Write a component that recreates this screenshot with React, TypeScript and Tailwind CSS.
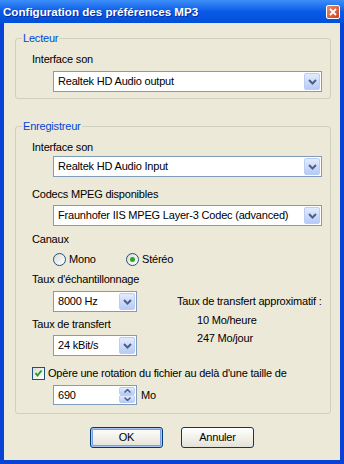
import type { ReactNode } from "react";

function Chevron() {
  return (
    <svg width="9" height="6" viewBox="0 0 9 6">
      <path d="M1 1 L4.5 4.5 L8 1" fill="none" stroke="#4d6185" strokeWidth="2" />
    </svg>
  );
}

function ArrowButton({ children }: { children: ReactNode }) {
  return (
    <div className="flex flex-1 items-center justify-center rounded-[2px] border border-[#b9cdf6] bg-gradient-to-b from-[#e3ebfe] to-[#b7cbf7]">
      {children}
    </div>
  );
}

function ComboBox({ value, className }: { value: string; className: string }) {
  return (
    <div className={`ml-[21px] flex h-[21px] border border-[#7f9db9] bg-white p-[1px] ${className}`}>
      <div className="flex flex-1 items-center whitespace-nowrap pl-[3px] leading-[13px]">{value}</div>
      <div className="flex w-[16px]">
        <ArrowButton>
          <Chevron />
        </ArrowButton>
      </div>
    </div>
  );
}

function Label({ children, className = "" }: { children: ReactNode; className?: string }) {
  return <div className={`h-[13px] whitespace-nowrap leading-[13px] ${className}`}>{children}</div>;
}

function Radio({ checked, label, className = "" }: { checked?: boolean; label: string; className?: string }) {
  return (
    <div className={`flex h-[13px] items-center ${className}`}>
      <span className="flex h-[13px] w-[13px] items-center justify-center rounded-full border border-[#1c5180] bg-gradient-to-br from-[#dcdcd5] to-white">
        {checked && <span className="h-[5px] w-[5px] rounded-full bg-[#2ca52c]" />}
      </span>
      <span className="ml-[3px] leading-[13px]">{label}</span>
    </div>
  );
}

function Button({ children, focused }: { children: ReactNode; focused?: boolean }) {
  return (
    <button
      type="button"
      className={`h-[21px] w-[73px] rounded-[3px] border border-[#003c74] bg-gradient-to-b from-white to-[#e4e2d6] text-[11px] leading-[13px] tracking-[-0.2px] text-black ${
        focused ? "shadow-[inset_0_0_0_1px_#a8c3f2,inset_0_0_0_2px_#7c9ee8]" : ""
      }`}
    >
      {children}
    </button>
  );
}

export default function App() {
  return (
    <div className="flex h-[464px] w-[344px] flex-col bg-[#0842d6] font-['Liberation_Sans',Arial,sans-serif] text-[11px] text-black">
      {/* Title bar */}
      <div className="flex h-[23px] items-center justify-between bg-gradient-to-b from-[#3d8ef8] via-[#0a5ae8] to-[#0350d8] pl-[3px] pr-[4px]">
        <span className="text-[11.6px] font-bold leading-[13px] text-white [text-shadow:1px_1px_#0a2a9c]">
          Configuration des préférences MP3
        </span>
        <div className="flex h-[14px] w-[14px] items-center justify-center rounded-[2px] border border-white bg-gradient-to-br from-[#eb8a6c] to-[#c9401c]">
          <svg width="8" height="8" viewBox="0 0 8 8">
            <path d="M1 1 L7 7 M7 1 L1 7" stroke="white" strokeWidth="1.8" />
          </svg>
        </div>
      </div>

      {/* Client area */}
      <div className="mx-[4px] mb-[4px] flex flex-1 flex-col bg-[#ece9d8] tracking-[-0.2px]">
        {/* Lecteur */}
        <fieldset className="ml-[11px] mt-[9px] w-[316px] rounded-[3px] border border-[#d0d0bf]">
          <legend className="ml-[6px] px-[1px] leading-[13px] text-[#0046d5]">Lecteur</legend>
          <div className="pb-[6px] pl-[16px]">
            <Label className="mt-[8px]">Interface son</Label>
            <ComboBox value="Realtek HD Audio output" className="mt-[5px] w-[269px]" />
          </div>
        </fieldset>

        {/* Enregistreur */}
        <fieldset className="ml-[11px] mt-[21px] w-[316px] rounded-[3px] border border-[#d0d0bf]">
          <legend className="ml-[6px] px-[1px] leading-[13px] text-[#0046d5]">Enregistreur</legend>
          <div className="pb-[8px] pl-[16px]">
            <Label className="mt-[8px]">Interface son</Label>
            <ComboBox value="Realtek HD Audio Input" className="mt-[2px] w-[269px]" />
            <Label className="mt-[11px]">Codecs MPEG disponibles</Label>
            <ComboBox value="Fraunhofer IIS MPEG Layer-3 Codec (advanced)" className="mt-[4px] w-[269px]" />
            <Label className="mt-[7px]">Canaux</Label>
            <div className="ml-[21px] mt-[7px] flex">
              <Radio label="Mono" className="w-[73px]" />
              <Radio label="Stéréo" checked />
            </div>

            <div className="mt-[7px] flex">
              <div className="w-[145px]">
                <Label>Taux d'échantillonnage</Label>
                <ComboBox value="8000 Hz" className="mt-[5px] w-[84px]" />
                <Label className="mt-[6px]">Taux de transfert</Label>
                <ComboBox value="24 kBit/s" className="mt-[4px] w-[84px]" />
              </div>
              <div className="pt-[22px]">
                <Label>Taux de transfert approximatif :</Label>
                <Label className="ml-[20px] mt-[6px]">10 Mo/heure</Label>
                <Label className="ml-[20px] mt-[5px]">247 Mo/jour</Label>
              </div>
            </div>

            <div className="mt-[11px] flex h-[13px] items-center">
              <span className="flex h-[13px] w-[13px] items-center justify-center border border-[#1c5180] bg-gradient-to-br from-[#dcdcd5] to-white">
                <svg width="9" height="9" viewBox="0 0 9 9">
                  <path d="M1.5 4 L3.5 6.5 L7.5 1.5" fill="none" stroke="#21a121" strokeWidth="2" />
                </svg>
              </span>
              <span className="ml-[3px] leading-[13px]">Opère une rotation du fichier au delà d'une taille de</span>
            </div>

            <div className="mt-[5px] flex items-center">
              <div className="ml-[21px] flex h-[20px] w-[84px] border border-[#7f9db9] bg-white p-[1px]">
                <div className="flex flex-1 items-center pl-[3px] leading-[13px]">690</div>
                <div className="flex w-[16px] flex-col">
                  <ArrowButton>
                    <svg width="7" height="4" viewBox="0 0 7 4">
                      <path d="M0.5 3.5 L3.5 0.5 L6.5 3.5" fill="none" stroke="#4d6185" strokeWidth="1.5" />
                    </svg>
                  </ArrowButton>
                  <ArrowButton>
                    <svg width="7" height="4" viewBox="0 0 7 4">
                      <path d="M0.5 0.5 L3.5 3.5 L6.5 0.5" fill="none" stroke="#4d6185" strokeWidth="1.5" />
                    </svg>
                  </ArrowButton>
                </div>
              </div>
              <span className="ml-[4px] leading-[13px]">Mo</span>
            </div>
          </div>
        </fieldset>

        {/* Buttons */}
        <div className="mt-[13px] flex justify-center gap-[18px]">
          <Button focused>OK</Button>
          <Button>Annuler</Button>
        </div>
      </div>
    </div>
  );
}
